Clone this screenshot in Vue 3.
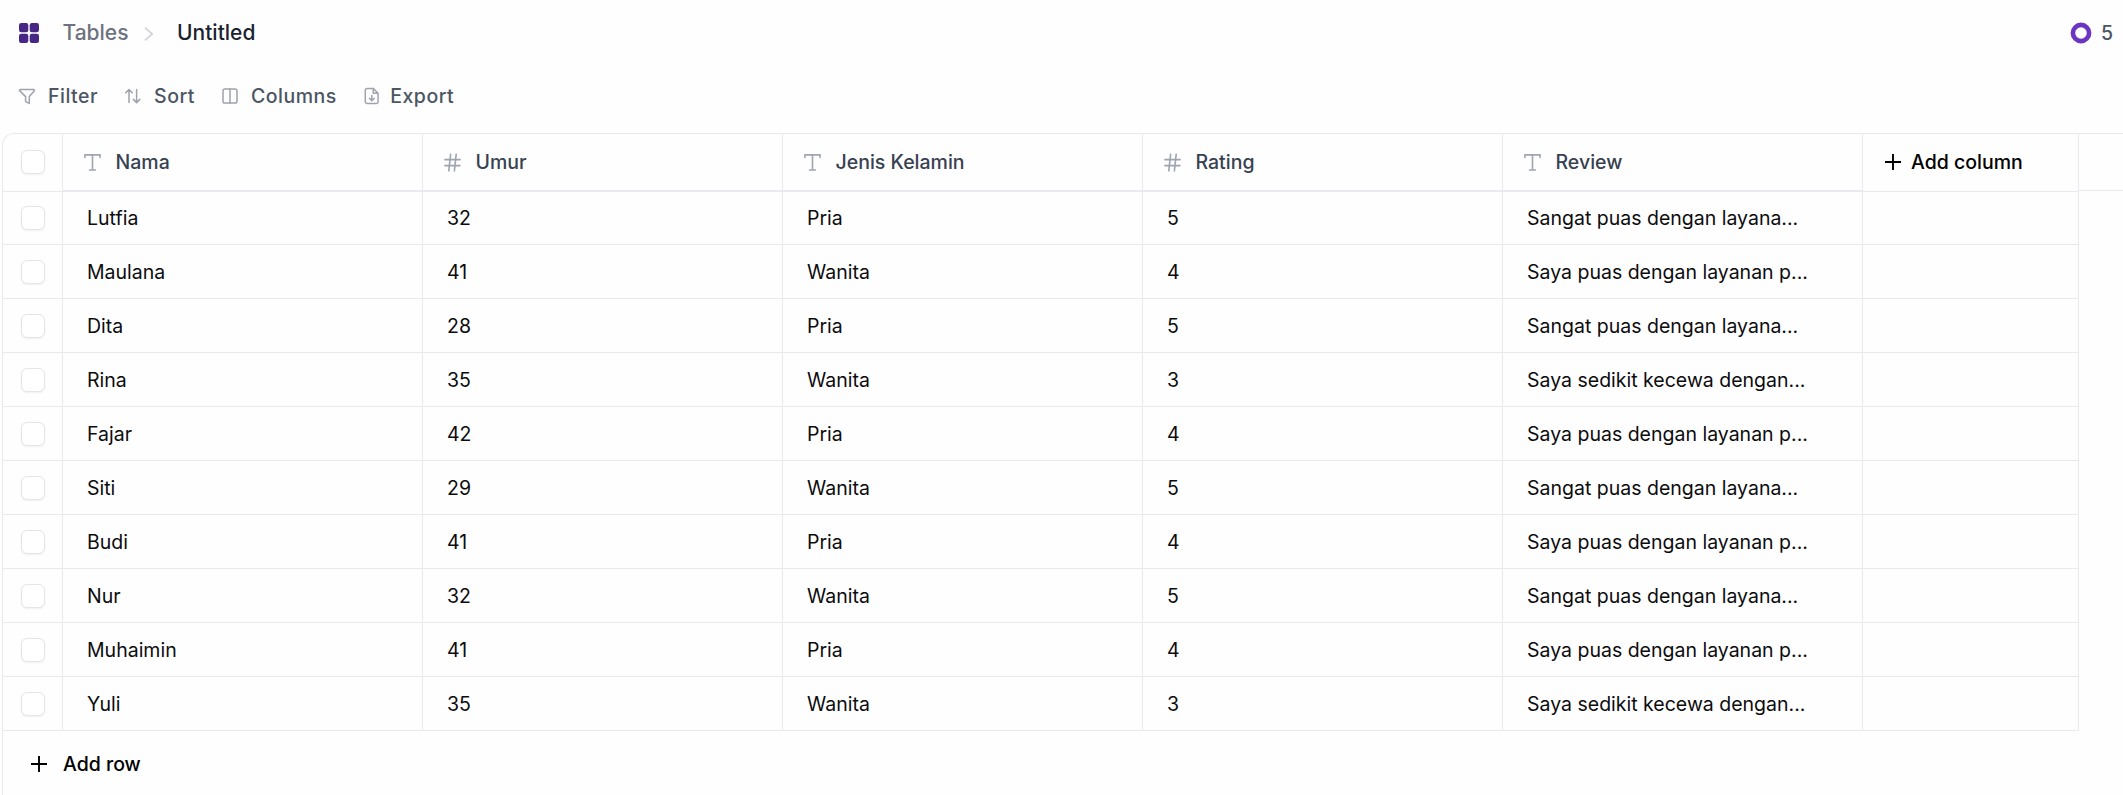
<script setup>
const tools = [
  { name: 'Filter', icon: 'filter' },
  { name: 'Sort', icon: 'sort' },
  { name: 'Columns', icon: 'columns' },
  { name: 'Export', icon: 'export' },
]
const columns = [
  { name: 'Nama', type: 'text' },
  { name: 'Umur', type: 'number' },
  { name: 'Jenis Kelamin', type: 'text' },
  { name: 'Rating', type: 'number' },
  { name: 'Review', type: 'text' },
]
const great = 'Sangat puas dengan layana...'
const good = 'Saya puas dengan layanan p...'
const poor = 'Saya sedikit kecewa dengan...'
const rows = [
  ['Lutfia', 32, 'Pria', 5, great],
  ['Maulana', 41, 'Wanita', 4, good],
  ['Dita', 28, 'Pria', 5, great],
  ['Rina', 35, 'Wanita', 3, poor],
  ['Fajar', 42, 'Pria', 4, good],
  ['Siti', 29, 'Wanita', 5, great],
  ['Budi', 41, 'Pria', 4, good],
  ['Nur', 32, 'Wanita', 5, great],
  ['Muhaimin', 41, 'Pria', 4, good],
  ['Yuli', 35, 'Wanita', 3, poor],
]
</script>

<template>
  <div class="page">
    <header class="topbar">
      <svg class="logo" viewBox="0 0 20 20">
        <rect x="0" y="0" width="9.3" height="9.3" rx="2.2" />
        <rect x="10.7" y="0" width="9.3" height="9.3" rx="2.2" />
        <rect x="0" y="10.7" width="9.3" height="9.3" rx="2.2" />
        <rect x="10.7" y="10.7" width="9.3" height="9.3" rx="2.2" />
      </svg>
      <span class="crumb">Tables</span>
      <svg class="chevron" viewBox="0 0 10 14"><path d="M1.5 1.1 8.2 7l-6.7 5.9" /></svg>
      <span class="current">Untitled</span>
      <div class="credits">
        <svg viewBox="0 0 22 22"><circle cx="11" cy="11" r="8.1" /></svg>
        <span>5</span>
      </div>
    </header>

    <nav class="toolbar">
      <button v-for="tool in tools" :key="tool.name" class="tool" :class="tool.icon">
        <svg viewBox="0 0 18 18">
          <path v-if="tool.icon === 'filter'" d="M2.5 2.4h13c.8 0 1.2.9.7 1.5L11.3 9.6v6.8L7.6 14.6v-5L1.8 3.9c-.6-.6-.1-1.5.7-1.5Z" />
          <path v-else-if="tool.icon === 'sort'" d="M5 15.4V2.5M1.7 5.8 5 2.5l3.3 3.3M12.6 2.5v13.1M9.4 12.4l3.2 3.2 3.2-3.2" />
          <template v-else-if="tool.icon === 'columns'">
            <rect x="2" y="2" width="14" height="14" rx="1.8" />
            <path d="M9 2v14" />
          </template>
          <path v-else d="M10.2 1.4H4.1a1.8 1.8 0 0 0-1.8 1.8v11.6a1.8 1.8 0 0 0 1.8 1.8h9.2a1.8 1.8 0 0 0 1.8-1.8V6.2L10.2 1.4v4.8h4.9M8.8 8.4v5.2M6.4 11.2l2.4 2.4 2.4-2.4" />
        </svg>
        <span>{{ tool.name }}</span>
      </button>
    </nav>

    <section class="table">
      <div class="row head">
        <div class="cell check"><i class="box"></i></div>
        <div v-for="col in columns" :key="col.name" class="cell title">
          <svg viewBox="0 0 18 20">
            <path v-if="col.type === 'text'" d="M1 4.6V1.9h16v2.7M9 1.9v16M5.9 17.9h6.2" />
            <path v-else d="M1 7h16M.9 13.3h16M7 1.2 5.1 18.9M12.9 1.2 11 18.9" />
          </svg>
          <span>{{ col.name }}</span>
        </div>
        <div class="cell add">
          <svg viewBox="0 0 16 16"><path d="M8 0v16M0 8h16" /></svg>
          <span>Add column</span>
        </div>
        <div class="rest"></div>
      </div>
      <div v-for="row in rows" :key="row[0]" class="row body">
        <div class="cell check"><i class="box"></i></div>
        <div v-for="(value, i) in row" :key="i" class="cell value">{{ value }}</div>
        <div class="cell"></div>
      </div>
      <div class="add-row">
        <svg viewBox="0 0 16 16"><path d="M8 0v16M0 8h16" /></svg>
        <span>Add row</span>
      </div>
    </section>
  </div>
</template>

<style>
body {
  background: #fefefe;
}
</style>

<style scoped>
.page {
  height: 795px;
  overflow: hidden;
  display: flex;
  flex-direction: column;
  font-family: Inter, "Liberation Sans", sans-serif;
  font-size: 19.5px;
  color: #0c0c0e;
}
svg {
  display: block;
  flex: none;
  fill: none;
  stroke-linecap: round;
  stroke-linejoin: round;
}
.topbar {
  height: 66px;
  flex: none;
  display: flex;
  align-items: center;
  padding-left: 19px;
  font-size: 21px;
}
.logo {
  width: 20px;
  height: 20px;
  fill: #482683;
}
.crumb,
.current {
  padding-bottom: 2px;
}
.crumb {
  margin-left: 23.5px;
  font-weight: 500;
  color: #6c727f;
}
.chevron {
  width: 10px;
  height: 14px;
  margin: 2px 0 0 15.5px;
  stroke: #d1d4db;
  stroke-width: 1.7;
}
.current {
  margin-left: 23px;
  font-weight: 500;
  color: #1a2230;
}
.credits {
  margin-left: auto;
  padding-right: 10px;
  display: flex;
  align-items: center;
  gap: 9px;
  font-size: 19.5px;
  font-weight: 500;
  color: #4b5563;
}
.credits svg {
  width: 22px;
  height: 22px;
  margin-top: -1px;
  stroke: #6b35c1;
  stroke-width: 4.6;
}
.toolbar {
  height: 67px;
  flex: none;
  box-sizing: border-box;
  padding: 0 0 7px 18px;
  display: flex;
  align-items: center;
  gap: 26px;
}
.tool {
  display: flex;
  align-items: center;
  gap: 12px;
  padding: 0;
  border: 0;
  background: none;
  font: 500 19.5px Inter, "Liberation Sans", sans-serif;
  letter-spacing: 0.5px;
  color: #4b5563;
}
.tool svg {
  width: 18px;
  height: 18px;
  stroke: #9ea3ae;
  stroke-width: 1.5;
}
.export {
  gap: 9.5px;
}
.table {
  flex: 1;
  margin-left: 2px;
  border: solid #e9eaee;
  border-width: 1px 0 0 1px;
  border-top-left-radius: 12px;
}
.row {
  display: grid;
  grid-template-columns: 60px repeat(5, 360px) 216px 1fr;
}
.head {
  height: 57px;
}
.body {
  height: 54px;
}
.cell {
  box-sizing: border-box;
  display: flex;
  align-items: center;
  border-right: 1px solid #e9eaee;
  white-space: nowrap;
}
.body .cell {
  border-bottom: 1px solid #e9eaee;
}
.head + .body .cell {
  border-top: 1px solid #e9eaee;
}
.check {
  padding-left: 18px;
}
.head .check,
.head .add {
  padding-bottom: 1px;
}
.box {
  box-sizing: border-box;
  width: 24px;
  height: 24px;
  border: 1px solid #e4e5e9;
  border-radius: 6px;
  background: #fff;
  box-shadow: 0 1px 2px rgba(0, 0, 0, 0.06);
}
.title {
  border-bottom: 1px solid #e9eaee;
  padding-left: 21px;
  gap: 14.5px;
  font-weight: 500;
  color: #374151;
}
.title svg {
  width: 17px;
  height: 19px;
  stroke: #9ea4b1;
  stroke-width: 1.7;
}
.rest {
  border-bottom: 1px solid #e9eaee;
}
.value {
  padding-left: 24px;
}
.add {
  padding-left: 22px;
  gap: 10px;
  font-weight: 500;
  color: #000;
}
.add svg,
.add-row svg {
  width: 16px;
  height: 16px;
  stroke: #000;
  stroke-width: 1.9;
  stroke-linecap: butt;
}
.add-row {
  height: 66px;
  display: flex;
  align-items: center;
  padding-left: 28px;
  gap: 16px;
  font-weight: 500;
  color: #000;
}
</style>
